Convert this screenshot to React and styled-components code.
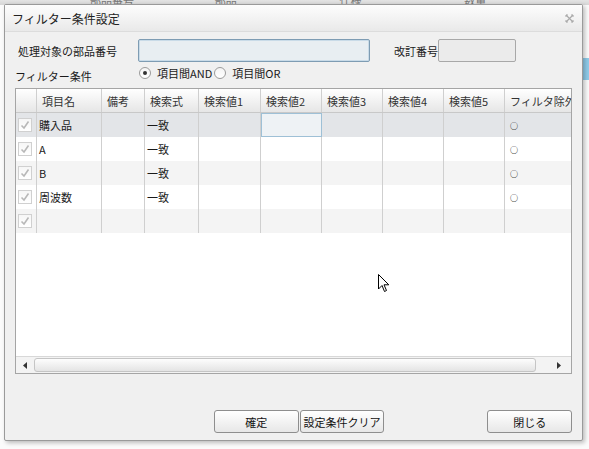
import styled, { createGlobalStyle } from "styled-components";

const GlobalStyle = createGlobalStyle`
  html, body {
    margin: 0;
    padding: 0;
  }
  body {
    width: 589px;
    height: 449px;
    overflow: hidden;
    font-family: "Noto Sans CJK JP", "Liberation Sans", sans-serif;
    font-size: 11px;
    color: #1a1a1a;
    background: #fafafa;
  }
`;

const columns = [
  { key: "name", label: "項目名", width: 65 },
  { key: "note", label: "備考", width: 43 },
  { key: "expr", label: "検索式", width: 54 },
  { key: "v1", label: "検索値1", width: 62 },
  { key: "v2", label: "検索値2", width: 61 },
  { key: "v3", label: "検索値3", width: 61 },
  { key: "v4", label: "検索値4", width: 61 },
  { key: "v5", label: "検索値5", width: 61 },
  { key: "ex", label: "フィルタ除外", width: 70 },
];

const rows = [
  { name: "購入品", expr: "一致", ex: "○" },
  { name: "A", expr: "一致", ex: "○" },
  { name: "B", expr: "一致", ex: "○" },
  { name: "周波数", expr: "一致", ex: "○" },
  {},
];

const Desktop = styled.div`
  position: relative;
  width: 589px;
  height: 449px;
  background:
    linear-gradient(#e4e4e4, #d6d6d6) top / 100% 5px no-repeat,
    linear-gradient(#8fcbe9, #8fcbe9) right 0 top 58px / 6px 22px no-repeat,
    #fbfbfb;
`;

const BackHeader = styled.div`
  display: flex;
  height: 5px;
  overflow: hidden;
  padding-left: 90px;
  font-size: 11px;
  line-height: 0;
  color: #777;
  span {
    width: 150px;
  }
`;

const Dialog = styled.div`
  position: absolute;
  left: 4px;
  top: 4px;
  width: 577px;
  height: 435px;
  border: 1px solid #9a9a9a;
  border-radius: 2px;
  background: #f0f0f0;
  box-shadow: 2px 2px 4px rgba(0, 0, 0, 0.25);
  display: flex;
  flex-direction: column;
`;

const TitleBar = styled.div`
  height: 26px;
  display: flex;
  align-items: center;
  justify-content: space-between;
  padding: 0 8px 0 7px;
  background: linear-gradient(#fdfdfd, #e9e9e9);
  border-bottom: 1px solid #dcdcdc;
  font-size: 12px;
  color: #222;
`;

const CloseIcon = styled.svg`
  width: 9px;
  height: 9px;
`;

const Body = styled.div`
  flex: 1;
  display: flex;
  flex-direction: column;
  padding: 7px 10px 0 10px;
`;

const FieldRow = styled.div`
  display: flex;
  align-items: center;
  height: 23px;
  padding-left: 3px;
`;

const Label = styled.span`
  width: ${(p) => p.$w}px;
  flex-shrink: 0;
  margin-top: ${(p) => p.$drop || 0}px;
`;

const TextBox = styled.div`
  width: ${(p) => p.$w}px;
  height: 21px;
  border: 1px solid ${(p) => (p.$focus ? "#7e9cb3" : "#a8a8a8")};
  border-radius: 2px;
  background: ${(p) => (p.$focus ? "#e8eef2" : "#ebebeb")};
  box-shadow: ${(p) => (p.$focus ? "inset 0 0 0 1px #c9dbe8" : "none")};
`;

const OptionRow = styled.div`
  display: flex;
  align-items: center;
  height: 22px;
`;

const Radio = styled.span`
  width: 12px;
  height: 12px;
  box-sizing: border-box;
  border: 1px solid #9b9b9b;
  border-radius: 50%;
  background: linear-gradient(#f4f4f4, #fff);
  display: flex;
  align-items: center;
  justify-content: center;
  margin-right: 6px;
  &::after {
    content: "";
    width: 4px;
    height: 4px;
    border-radius: 50%;
    background: ${(p) => (p.$on ? "#333" : "transparent")};
  }
`;

const RadioText = styled.span`
  margin-right: 2px;
`;

const Grid = styled.div`
  margin-top: 4px;
  width: 555px;
  height: 284px;
  border: 1px solid #a5a5a5;
  background: #fff;
  display: flex;
  flex-direction: column;
  overflow: hidden;
`;

const HeadRow = styled.div`
  display: flex;
  height: 24px;
  flex-shrink: 0;
  background: linear-gradient(#ffffff, #e6e6e6);
  border-bottom: 1px solid #c8c8c8;
  box-sizing: border-box;
`;

const HeadCell = styled.div`
  width: ${(p) => p.$w}px;
  flex-shrink: 0;
  box-sizing: border-box;
  border-right: 1px solid #cfcfcf;
  padding-left: 5px;
  display: flex;
  align-items: center;
  white-space: nowrap;
  overflow: hidden;
  color: #333;
`;

const Rows = styled.div`
  flex: 1;
`;

const Row = styled.div`
  display: flex;
  height: 24px;
  background: ${(p) => (p.$selected ? "#e3e5e8" : p.$alt ? "#f4f4f4" : "#fff")};
`;

const Cell = styled.div`
  width: ${(p) => p.$w}px;
  flex-shrink: 0;
  box-sizing: border-box;
  border-right: 1px solid #cfcfcf;
  padding-left: ${(p) => (p.$mark ? 5 : 2)}px;
  display: flex;
  align-items: center;
  white-space: nowrap;
  overflow: hidden;
  font-size: ${(p) => (p.$mark ? "8px" : "11px")};
  ${(p) => p.$mark && `color: #222; font-weight: bold;`}
  ${(p) => p.$focus && `border: 1px solid #9ec0d6; background: #eef2f5;`}
`;

const CheckBox = styled.span`
  width: 14px;
  height: 14px;
  box-sizing: border-box;
  border: 1px solid #d0d0d0;
  background: linear-gradient(#f6f6f6, #fff);
  display: flex;
  align-items: center;
  justify-content: center;
`;

const ScrollBar = styled.div`
  height: 16px;
  flex-shrink: 0;
  display: flex;
  align-items: center;
  background: #f3f3f3;
  border-top: 1px solid #d8d8d8;
`;

const ArrowBtn = styled.div`
  width: 18px;
  height: 15px;
  display: flex;
  align-items: center;
  justify-content: center;
`;

const Thumb = styled.div`
  flex: 1;
  height: 12px;
  margin: 0 14px 0 0;
  border: 1px solid #c5c5c5;
  border-radius: 3px;
  background: linear-gradient(#fdfdfd, #e4e4e4);
  max-width: 500px;
`;

const Footer = styled.div`
  display: flex;
  align-items: center;
  margin-top: 36px;
  padding-left: 199px;
`;

const Button = styled.button`
  width: 85px;
  height: 23px;
  border: 1px solid #8e8e8e;
  border-radius: 3px;
  background: linear-gradient(#ffffff, #e7e7e7);
  font-family: inherit;
  font-size: 11px;
  color: #111;
  padding: 0;
  margin-right: ${(p) => p.$mr || 0}px;
`;

const Cursor = styled.svg`
  position: absolute;
  left: 378px;
  top: 274px;
  width: 12px;
  height: 19px;
`;

const Check = () => (
  <svg width="10" height="10" viewBox="0 0 10 10">
    <path d="M1.5 5.5 L4 8 L8.5 1.5" fill="none" stroke="#b8b8b8" strokeWidth="1.6" />
  </svg>
);

export default function App() {
  return (
    <Desktop>
      <GlobalStyle />
      <BackHeader>
        <span>部品番号</span>
        <span>部品</span>
        <span>仕様</span>
        <span>数量</span>
      </BackHeader>
      <Dialog>
        <TitleBar>
          <span>フィルター条件設定</span>
          <CloseIcon viewBox="0 0 9 9">
            <path d="M1 1 L8 8 M8 1 L1 8" stroke="#aaa" strokeWidth="1.2" fill="none" />
            <path
              d="M1 1 L3 1 M1 1 L1 3 M8 1 L6 1 M8 1 L8 3 M1 8 L1 6 M1 8 L3 8 M8 8 L6 8 M8 8 L8 6"
              stroke="#aaa"
              strokeWidth="1"
              fill="none"
            />
          </CloseIcon>
        </TitleBar>
        <Body>
          <FieldRow>
            <Label $w={120}>処理対象の部品番号</Label>
            <TextBox $w={230} $focus />
            <Label $w={24} />
            <Label $w={44}>改訂番号</Label>
            <TextBox $w={76} />
          </FieldRow>
          <OptionRow>
            <Label $w={124} $drop={5}>
              フィルター条件
            </Label>
            <Radio $on />
            <RadioText>項目間AND</RadioText>
            <Radio />
            <RadioText>項目間OR</RadioText>
          </OptionRow>
          <Grid>
            <HeadRow>
              <HeadCell $w={21} />
              {columns.map((c) => (
                <HeadCell key={c.key} $w={c.width}>
                  {c.label}
                </HeadCell>
              ))}
            </HeadRow>
            <Rows>
              {rows.map((r, i) => (
                <Row key={i} $selected={i === 0} $alt={i % 2 === 0}>
                  <Cell $w={21}>
                    <CheckBox>
                      <Check />
                    </CheckBox>
                  </Cell>
                  {columns.map((c) => (
                    <Cell
                      key={c.key}
                      $w={c.width}
                      $mark={c.key === "ex"}
                      $focus={i === 0 && c.key === "v2"}
                    >
                      {r[c.key] || ""}
                    </Cell>
                  ))}
                </Row>
              ))}
            </Rows>
            <ScrollBar>
              <ArrowBtn>
                <svg width="4" height="7" viewBox="0 0 4 7">
                  <path d="M4 0 L0 3.5 L4 7 Z" fill="#333" />
                </svg>
              </ArrowBtn>
              <Thumb />
              <ArrowBtn>
                <svg width="4" height="7" viewBox="0 0 4 7">
                  <path d="M0 0 L4 3.5 L0 7 Z" fill="#333" />
                </svg>
              </ArrowBtn>
            </ScrollBar>
          </Grid>
          <Footer>
            <Button $mr={1}>確定</Button>
            <Button $mr={103}>設定条件クリア</Button>
            <Button>閉じる</Button>
          </Footer>
        </Body>
      </Dialog>
      <Cursor viewBox="0 0 12 19">
        <path
          d="M0.5 0.5 L0.5 15 L4 11.5 L6.5 17.5 L8.5 16.5 L6 10.8 L10.8 10.8 Z"
          fill="#fff"
          stroke="#000"
          strokeWidth="1"
        />
      </Cursor>
    </Desktop>
  );
}
